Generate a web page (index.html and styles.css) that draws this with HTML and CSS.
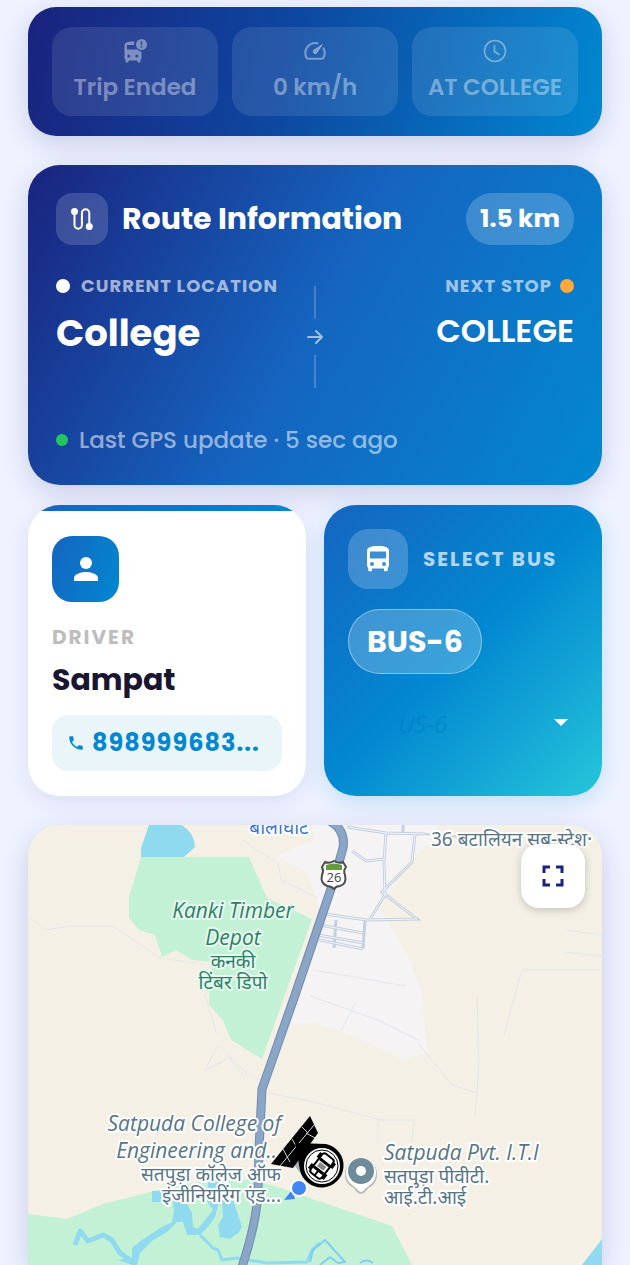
FILE: index.html
```html
<!DOCTYPE html>
<html lang="en">
<head>
    <meta charset="UTF-8">
    <meta name="viewport" content="width=device-width, initial-scale=1.0">
    <title>Bus Tracker</title>
    <link rel="stylesheet" href="styles.css">
</head>
<body>
    <main class="app">
        <section class="card status-card">
            <div class="status-item">
                <svg class="status-icon" viewBox="0 0 24 24" fill="currentColor">
                    <path d="M11.300 2.500C6.500 2.300 1.500 2.600 1.500 6.500V19c0 .9.400 1.500 1 2v1.500a1 1 0 0 0 1 1h1a1 1 0 0 0 1-1V21.500h9v1a1 1 0 0 0 1 1h1a1 1 0 0 0 1-1V21c.6-.5 1-1.100 1-2v-6.200a7 7 0 0 1-4-2.300H4V6h7.200a8 8 0 0 1 .1-3.500zM5.800 18.500a1.500 1.500 0 1 1 0-3 1.500 1.500 0 0 1 0 3zm8 0a1.500 1.500 0 1 1 0-3 1.500 1.500 0 0 1 0 3z"/>
                    <path fill-rule="evenodd" d="M18.500 0a5.500 5.500 0 1 0 0 11 5.500 5.500 0 0 0 0-11zm-.7 2.300h1.400v4h-1.400zm0 5h1.400v1.500h-1.400z"/>
                </svg>
                <span>Trip Ended</span>
            </div>
            <div class="status-item">
                <svg class="status-icon" viewBox="0 0 24 24" fill="none" stroke="currentColor" stroke-width="2" stroke-linecap="round" stroke-linejoin="round">
                    <path d="M14.500 4.300A10 10 0 0 0 3.700 19q.4.800 1.300.8h14q.9 0 1.300-.8a10 10 0 0 0 .3-9.500"/>
                    <path d="M19 6l-5.700 8.300a2 2 0 0 1-2.700-2.700z" fill="currentColor" stroke-width="1"/>
                </svg>
                <span>0 km/h</span>
            </div>
            <div class="status-item">
                <svg class="status-icon" viewBox="0 0 24 24" fill="none" stroke="currentColor" stroke-width="1.600" stroke-linecap="round">
                    <circle cx="12" cy="12" r="10.500"/>
                    <path d="M11.500 6.500v6l4.500 3"/>
                </svg>
                <span>AT COLLEGE</span>
            </div>
        </section>

        <section class="card route-card">
            <div class="route-header">
                <div class="route-icon">
                    <svg width="24" height="24" viewBox="0 0 24 24" fill="none" stroke="#fff" stroke-width="2">
                        <path d="M4.500 5v13a3.700 3.700 0 0 0 7.400 0V6a3.700 3.700 0 0 1 7.400 0v13"/>
                        <circle cx="4.500" cy="4.500" r="2.500" fill="#fff"/>
                        <circle cx="19.300" cy="19.500" r="2.500" fill="#fff"/>
                    </svg>
                </div>
                <h2>Route Information</h2>
                <span class="distance">1.5 km</span>
            </div>

            <div class="stops">
                <div class="stop">
                    <div class="stop-label"><span class="dot"></span>CURRENT LOCATION</div>
                    <div class="stop-current">College</div>
                </div>
                <div class="stop-divider">
                    <span class="line"></span>
                    <svg width="18" height="18" viewBox="0 0 18 18" fill="none" stroke="currentColor" stroke-width="2" stroke-linecap="round" stroke-linejoin="round">
                        <path d="M2 9h14M10 3l6 6-6 6"/>
                    </svg>
                    <span class="line"></span>
                </div>
                <div class="stop stop-right">
                    <div class="stop-label">NEXT STOP<span class="dot dot-orange"></span></div>
                    <div class="stop-next">COLLEGE</div>
                </div>
            </div>

            <div class="gps"><span class="dot dot-green"></span>Last GPS update · 5 sec ago</div>
        </section>

        <div class="grid">
            <section class="card driver-card">
                <div class="driver-icon">
                    <svg width="36" height="36" viewBox="0 0 24 24" fill="#fff">
                        <circle cx="12" cy="8" r="4"/>
                        <path d="M12 14c-2.700 0-8 1.300-8 4v2h16v-2c0-2.700-5.300-4-8-4z"/>
                    </svg>
                </div>
                <div class="driver-label">DRIVER</div>
                <div class="driver-name">Sampat</div>
                <a class="phone" href="tel:898999683">
                    <svg width="18" height="18" viewBox="0 0 24 24" fill="currentColor">
                        <path d="M6.600 10.800c1.400 2.800 3.800 5.100 6.600 6.600l2.200-2.200c.3-.3.7-.4 1-.2 1.100.4 2.300.6 3.600.6.6 0 1 .4 1 1V20c0 .6-.4 1-1 1C10.600 21 3 13.400 3 4c0-.6.4-1 1-1h3.500c.6 0 1 .4 1 1 0 1.300.2 2.500.6 3.600.1.3 0 .7-.2 1z"/>
                    </svg>
                    <span>898999683...</span>
                </a>
            </section>

            <section class="card bus-card">
                <div class="bus-header">
                    <div class="bus-icon">
                        <svg width="26" height="28" viewBox="0 0 26 28">
                            <path fill="#fff" fill-rule="evenodd" d="M13 1C5 1 2 2.500 2 6v14c0 1.200.5 2.200 1.300 3v2c0 .8.5 1.300 1.200 1.300h1.200c.8 0 1.300-.5 1.300-1.300v-1.500h12V25c0 .8.5 1.300 1.300 1.300h1.200c.7 0 1.200-.5 1.200-1.300v-2c.8-.8 1.300-1.800 1.300-3V6c0-3.500-3-5-11-5zM5 6.500h16v7H5zM7 21a2 2 0 1 1 0-4 2 2 0 0 1 0 4zm12 0a2 2 0 1 1 0-4 2 2 0 0 1 0 4z"/>
                        </svg>
                    </div>
                    <label for="bus">SELECT BUS</label>
                </div>
                <span class="bus-chip">BUS-6</span>
                <div class="bus-picker">
                    <select id="bus">
                        <option>US-6</option>
                    </select>
                    <svg class="caret" width="14" height="8" viewBox="0 0 14 8"><path d="M0 0h14L7 7z" fill="#fff"/></svg>
                </div>
            </section>
        </div>

        <section class="map">
            <svg class="map-canvas" viewBox="28 825 574 440" preserveAspectRatio="xMidYMin slice">
                <rect x="28" y="825" width="574" height="440" fill="#f4f0e5"/>

                <!-- built-up area -->
                <path fill="#f5f3f4" d="M310 825h128l-10 20-28 24-8 20-12 20 12 20 16 28 14 36 5 60-26 6-45-22-40-14H288l32-110-12-40-32-16 20-10 18-6-4-30-20-15z"/>

                <!-- parks -->
                <path fill="#c3f1d5" d="M141 857H249L267 898 312 919 262 1059 231 1040 223 1020 209 1005 211 962 192 960 176 950 162 957 155 935 139 930 129 918V897z"/>
                <path fill="#c3f1d5" d="M28 1214L67 1219 103 1204 167 1188 210 1180H253L287 1190 310 1198 392 1226 412 1265H28z"/>

                <!-- water -->
                <path fill="#8fdaee" d="M149 825H182Q195 834 195 847L184 857H141V848zM602 1239V1265H582zM152 1191H165V1202H152zM208 1180H220V1190H208z"/>
                <path fill="#8fdaee" d="M173 1200H185L192 1213 193 1227 198 1229 213 1210 205 1198H220L215 1217 207 1228 200 1235H187L183 1222H177L167 1232 153 1240 140 1253 137 1265H132L118 1260 132 1257V1248L142 1240 160 1228 172 1222 174 1212z"/>
                <path fill="#8fdaee" d="M222 1200H233L242 1227 239 1232 230 1239 220 1237 218 1225 223 1217z"/>
                <g fill="none" stroke="#8fdaee" stroke-linejoin="round">
                    <path stroke-width="5" d="M75 1245L80 1231 88 1241 103 1235 112 1240 120 1253 133 1262"/>
                    <path stroke-width="3" d="M200 1235L213 1248 218 1250 222 1260 237 1258 267 1263 307 1262 312 1250 320 1243"/>
                    <path stroke-width="2" stroke="#7fcdf0" d="M310 1262L313 1250 325 1240 345 1262 338 1263 330 1257 320 1265M360 1263Q366 1258 373 1263"/>
                </g>

                <!-- minor roads -->
                <g fill="none" stroke="#e2e7ec">
                    <path d="M29 917l17 13 25-4h42l47 32 50 7 5 12-10 18 12 40M243 840l35 24 3 16 37 18M205 1070l13-25 16 16 13 13 20 8M205 1070l25-12 15 20M268 1093l42 8 70 19h34l-2 20-5 20"/>
                    <path d="M314 970l92 16M310 996l68 24 40 20M355 1003l-14 28M522 970h78M522 970l-18 65M477 995l2 70-4 50M417 1042l35 43 24 8M566 930l36 5M563 952l39 4M378 1119v24"/>
                </g>
                <g fill="none" stroke="#c3d0df" stroke-width="3">
                    <path d="M347 827l39 6 39 1M386 833l-2 28 1 34-15 24M415 834l-3 28-30 30 35 27-50 1-42-6M403 825v9M352 851l14 10 18-2M320 925l43 8M318 935l45 8M315 939l48 10M336 920l-2 28M365 921l-2 28"/>
                    <path d="M425 834l60 5" stroke-width="2"/>
                </g>
                <g fill="none" stroke="#f3f5f9">
                    <path d="M347 827l39 6 39 1M386 833l-2 28 1 34-15 24M415 834l-3 28-30 30 35 27-50 1-42-6M352 851l14 10 18-2M320 925l43 8M318 935l45 8M315 939l48 10"/>
                </g>

                <!-- highway -->
                <g fill="none" stroke-linejoin="round">
                    <path stroke="#6f8bae" stroke-width="9" d="M328 820q18 9 15 28l-9 32-40 118-32 91-3 60-1 42q-1 30-16 76"/>
                    <path stroke="#8aa5c5" stroke-width="7" d="M328 820q18 9 15 28l-9 32-40 118-32 91-3 60-1 42q-1 30-16 76"/>
                </g>

                <!-- route shield -->
                <path d="M325 862q4 2 9-1 5 3 9 1l3 5q-3 4-1 8 2 9-5 11-4 0-6 3-3-3-7-3-7-3-5-11 2-4 0-8z" fill="#fff" stroke="#4c4d4c" stroke-width="2"/>
                <path d="M326 865q8-3 16 0v5h-16z" fill="#669b45"/>
                <text class="shield-text" x="334" y="882">26</text>

                <!-- place labels -->
                <text class="place blue hindi" x="279" y="834" text-anchor="middle">बालाघाट</text>
                <text class="place hindi" x="431" y="846">36 बटालियन सब-स्टेश·</text>
                <g class="place green" text-anchor="middle">
                    <text x="233" y="918">Kanki Timber</text>
                    <text x="233" y="945">Depot</text>
                    <text class="hindi" x="233" y="968">कनकी</text>
                    <text class="hindi" x="233" y="989">टिंबर डिपो</text>
                </g>
                <g class="place" text-anchor="end">
                    <text x="281" y="1131">Satpuda College of</text>
                    <text x="277" y="1158">Engineering and..</text>
                    <text class="hindi" x="281" y="1181">सतपुड़ा कॉलेज ऑफ</text>
                    <text class="hindi" x="281" y="1202">इंजीनियरिंग एंड...</text>
                </g>
                <g class="place">
                    <text x="384" y="1160">Satpuda Pvt. I.T.I</text>
                    <text class="hindi" x="384" y="1183">सतपुड़ा पीवीटी.</text>
                    <text class="hindi" x="384" y="1204">आई.टी.आई</text>
                </g>

                <!-- place pin -->
                <path d="M361 1194q-3 0-5-3-3-4-7-6a16 16 0 1 1 24 0q-4 2-7 6-2 3-5 3z" fill="#9a9a9a" opacity=".6"/>
                <path d="M361 1192q-2 0-4-3l-7-6a15 15 0 1 1 22 0l-7 6q-2 3-4 3z" fill="#fff"/>
                <circle cx="361" cy="1171" r="13" fill="#6d8b9b"/>
                <circle cx="361" cy="1171" r="5" fill="#fff"/>

                <!-- user location -->
                <path d="M284 1200l8-10 3 9z" fill="#4285f4"/>
                <circle cx="299" cy="1188" r="9" fill="#fff"/>
                <circle cx="299" cy="1188" r="7" fill="#4285f4"/>

                <!-- bus marker -->
                <path d="M291 1160l12 17v-14z" fill="#9db1b8"/>
                <path d="M310 1116l8 17-25 35-22-4z" fill="#000"/>
                <path d="M314 1125l-34 41M302 1127l6 6M292 1139l7 12M283 1149l7 13M306 1133l9 5" fill="none" stroke="#d5d5d5"/>
                <path d="M295 1143l31 1a22 22 0 1 1-26 26z" fill="#000"/>
                <circle cx="322" cy="1166" r="18" fill="#fff"/>
                <circle cx="322" cy="1166" r="16" fill="#fff" stroke="#000"/>
                <g transform="rotate(38 322 1166)">
                    <path d="M312 1156h3v6h-3zM329 1156h3v6h-3zM312 1170h3v6h-3zM329 1170h3v6h-3z" fill="#000"/>
                    <rect x="315" y="1154" width="14" height="24" rx="3" fill="#fff" stroke="#000" stroke-width="2"/>
                    <path d="M316 1160h12v3h-12zM316 1170h12v3h-12zM321 1172h2v6h-2z" fill="#000"/>
                    <rect x="318" y="1164" width="8" height="5" fill="#888"/>
                </g>
            </svg>
            <button class="fullscreen" aria-label="Fullscreen">
                <svg width="22" height="22" viewBox="0 0 22 22" fill="none" stroke="#1a237e" stroke-width="3">
                    <path d="M2 8V2h6M14 2h6v6M20 14v6h-6M8 20H2v-6"/>
                </svg>
            </button>
        </section>
    </main>
</body>
</html>
```

FILE: styles.css
```css
* {
    box-sizing: border-box;
}

body {
    margin: 0;
    font-family: Poppins, Inter, "Noto Sans", sans-serif;
    background: #eff3ff;
    color: #1a1530;
}

.app {
    display: flex;
    flex-direction: column;
    min-height: 100vh;
    padding: 7px 28px 0;
}

.card {
    border-radius: 32px;
    box-shadow: 0 8px 28px rgba(26, 35, 126, 0.18);
}

/* Status */
.status-card {
    display: grid;
    grid-template-columns: repeat(3, 1fr);
    gap: 14px;
    padding: 20px 24px;
    margin-bottom: 29px;
    border-radius: 28px;
    background: linear-gradient(103deg, #1a237e 0%, #0d47a1 45%, #0288d1 100%);
}

.status-item {
    display: flex;
    flex-direction: column;
    align-items: center;
    gap: 8px;
    padding: 12px 4px;
    border-radius: 20px;
    background: rgba(255, 255, 255, 0.1);
    color: rgba(255, 255, 255, 0.4);
    font-size: 23px;
    font-weight: 600;
    line-height: 33px;
    white-space: nowrap;
}

.status-icon {
    width: 24px;
    height: 24px;
}

/* Route */
.route-card {
    padding: 28px;
    margin-bottom: 20px;
    color: #fff;
    background: linear-gradient(119deg, #1a237e 0%, #1565c0 50%, #0288d1 100%);
}

.route-header {
    display: flex;
    align-items: center;
    gap: 14px;
    margin-bottom: 30px;
}

.route-icon {
    display: flex;
    align-items: center;
    justify-content: center;
    width: 52px;
    height: 52px;
    border-radius: 16px;
    background: rgba(255, 255, 255, 0.16);
}

.route-header h2 {
    flex: 1;
    margin: 0;
    font-size: 30px;
    font-weight: 700;
}

.distance {
    padding: 0 14px;
    border-radius: 26px;
    background: rgba(255, 255, 255, 0.2);
    font-size: 25px;
    font-weight: 700;
    line-height: 52px;
}

.stops {
    display: grid;
    grid-template-columns: 1fr 32px 1fr;
    min-height: 114px;
}

.stop-label {
    display: flex;
    align-items: center;
    gap: 11px;
    margin-bottom: 16px;
    color: rgba(255, 255, 255, 0.6);
    font-size: 18px;
    font-weight: 700;
    letter-spacing: 1px;
    line-height: 22px;
    white-space: nowrap;
}

.stop-right {
    text-align: right;
}

.stop-right .stop-label {
    justify-content: flex-end;
    gap: 8px;
}

.dot {
    width: 14px;
    height: 14px;
    border-radius: 50%;
    background: #fff;
}

.dot-orange {
    background: #ffa83c;
}

.dot-green {
    width: 12px;
    height: 12px;
    background: #22c55e;
}

.stop-current {
    font-size: 37px;
    font-weight: 700;
    line-height: 40px;
}

.stop-next {
    font-size: 32px;
    font-weight: 600;
    line-height: 36px;
}

.stop-divider {
    display: flex;
    flex-direction: column;
    align-items: center;
    gap: 9px;
    padding-top: 11px;
    color: rgba(255, 255, 255, 0.6);
}

.line {
    width: 2px;
    height: 33px;
    background: rgba(255, 255, 255, 0.2);
}

.gps {
    display: flex;
    align-items: center;
    gap: 11px;
    margin-top: 34px;
    color: rgba(255, 255, 255, 0.55);
    font-size: 23px;
    font-weight: 500;
    line-height: 34px;
}

/* Driver + bus */
.grid {
    display: grid;
    grid-template-columns: 1fr 1fr;
    gap: 18px;
    margin-bottom: 29px;
}

.driver-card {
    padding: 31px 24px 25px;
    background: linear-gradient(90deg, #1565c0, #0288d1) top / 100% 6px no-repeat, #fff;
    box-shadow: 0 6px 24px rgba(26, 35, 126, 0.1);
}

.driver-icon {
    display: flex;
    align-items: center;
    justify-content: center;
    width: 67px;
    height: 66px;
    margin-bottom: 20px;
    border-radius: 20px;
    background: linear-gradient(110deg, #1565c0, #0288d1);
}

.driver-label {
    color: #bdbdbd;
    font-size: 20px;
    font-weight: 700;
    letter-spacing: 2px;
    line-height: 30px;
}

.driver-name {
    margin: 8px 0 15px;
    font-size: 30px;
    font-weight: 700;
    line-height: 40px;
}

.phone {
    display: flex;
    align-items: center;
    gap: 7px;
    padding: 0 16px 0 15px;
    border-radius: 16px;
    background: #eaf5fa;
    color: #0288d1;
    font-size: 24px;
    font-weight: 700;
    letter-spacing: 1px;
    line-height: 56px;
    text-decoration: none;
}

.bus-card {
    padding: 24px;
    background: linear-gradient(135deg, #1565c0 0%, #0288d1 50%, #26c6da 100%);
    box-shadow: 0 6px 24px rgba(2, 136, 209, 0.2);
}

.bus-header {
    display: flex;
    align-items: center;
    gap: 15px;
    margin-bottom: 20px;
}

.bus-header label {
    color: rgba(255, 255, 255, 0.7);
    font-size: 20px;
    font-weight: 700;
    letter-spacing: 2px;
    white-space: nowrap;
}

.bus-icon {
    display: flex;
    align-items: center;
    justify-content: center;
    width: 60px;
    height: 60px;
    border-radius: 20px;
    background: rgba(255, 255, 255, 0.2);
}

.bus-chip {
    display: inline-block;
    padding: 0 18px;
    border: 1px solid rgba(255, 255, 255, 0.4);
    border-radius: 32px;
    background: rgba(255, 255, 255, 0.22);
    color: #fff;
    font-size: 30px;
    font-weight: 700;
    line-height: 63px;
}

.bus-picker {
    display: flex;
    align-items: center;
    margin-top: 21px;
    padding-right: 10px;
}

.bus-picker select {
    flex: 1;
    min-width: 0;
    height: 56px;
    padding: 0 50px;
    border: none;
    appearance: none;
    background: transparent;
    color: rgba(2, 100, 180, 0.25);
    font: italic 24px "Open Sans", sans-serif;
}

.caret {
    pointer-events: none;
}

/* Map */
.map {
    position: relative;
    flex: 1;
    min-height: 420px;
    border-radius: 32px 32px 0 0;
    overflow: hidden;
    box-shadow: 0 8px 28px rgba(26, 35, 126, 0.18);
}

.map-canvas {
    position: absolute;
    width: 100%;
    height: 100%;
}

.place {
    fill: #577584;
    stroke: #fff;
    stroke-width: 4px;
    stroke-linejoin: round;
    paint-order: stroke;
    font: italic 21px "Open Sans", "Noto Sans", sans-serif;
}

.hindi {
    font: 19px "Noto Sans", "Noto Sans Devanagari", sans-serif;
}

.green {
    fill: #2f8069;
    stroke: #e6f9ee;
}

.blue {
    fill: #3877d8;
}

.shield-text {
    fill: #444;
    font: 13px "Open Sans", sans-serif;
    text-anchor: middle;
}

.fullscreen {
    position: absolute;
    top: 19px;
    right: 17px;
    display: flex;
    align-items: center;
    justify-content: center;
    width: 64px;
    height: 64px;
    padding: 0;
    border: none;
    border-radius: 18px;
    background: #fff;
    box-shadow: 0 2px 8px rgba(0, 0, 0, 0.2);
    cursor: pointer;
}
```
